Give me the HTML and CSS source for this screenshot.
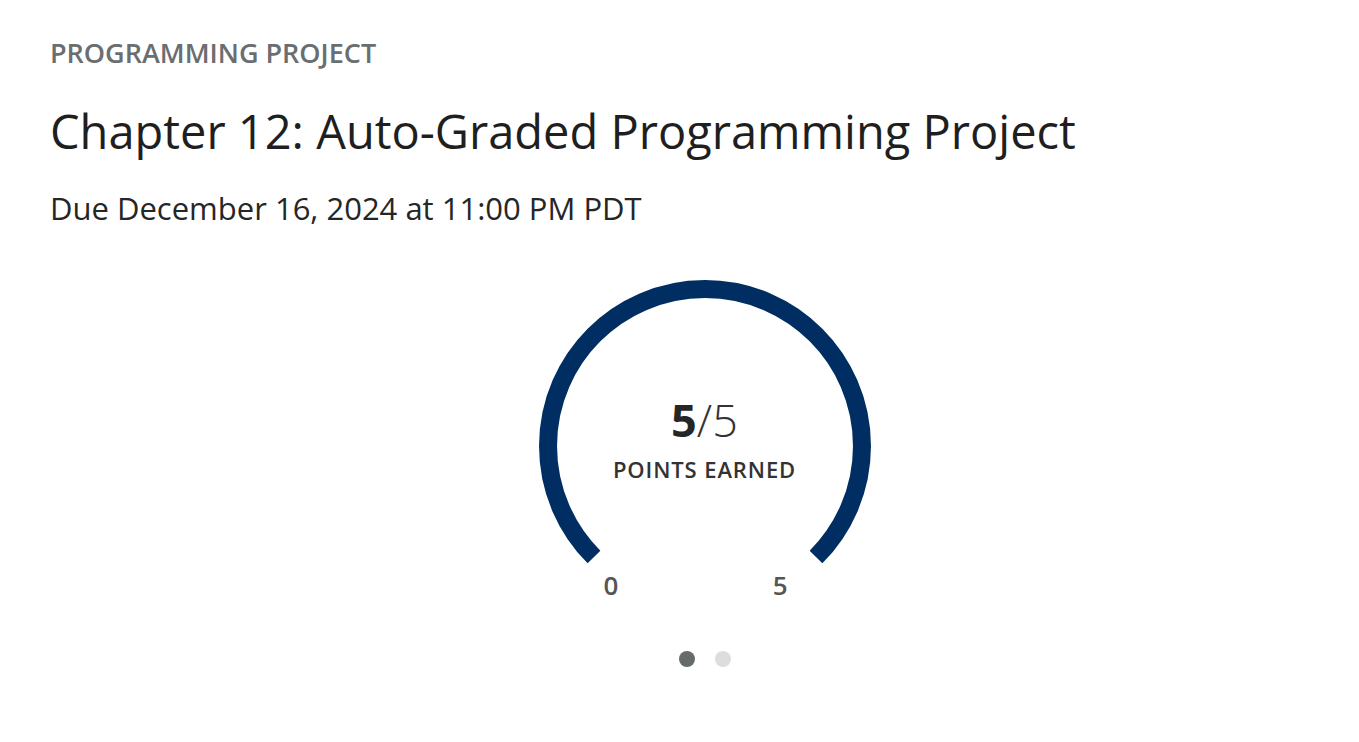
FILE: index.html
```html
<!DOCTYPE html>
<html lang="en">
<head>
<meta charset="utf-8">
<title>Chapter 12: Auto-Graded Programming Project</title>
<link rel="stylesheet" href="styles.css">
</head>
<body>
<main class="page">
  <header class="header">
    <div class="eyebrow">PROGRAMMING PROJECT</div>
    <h1 class="title">Chapter 12: Auto-Graded Programming Project</h1>
    <p class="due">Due December 16, 2024 at 11:00 PM PDT</p>
  </header>
  <section class="carousel">
    <div class="gauge">
      <svg class="gauge-arc" width="332" height="285" viewBox="0 0 332 285" aria-hidden="true">
        <path d="M 55 277 A 157 157 0 1 1 277 277" fill="none" stroke="#002d62" stroke-width="18"/>
      </svg>
      <div class="gauge-center">
        <div class="score"><b>5</b>/5</div>
        <div class="score-label">POINTS EARNED</div>
      </div>
      <div class="gauge-scale">
        <span>0</span>
        <span>5</span>
      </div>
    </div>
    <div class="dots">
      <span class="dot active"></span>
      <span class="dot"></span>
    </div>
  </section>
</main>
</body>
</html>
```
FILE: styles.css
```css
html, body {
  margin: 0;
  padding: 0;
  background: #ffffff;
}
body {
  font-family: "Open Sans", "Noto Sans", sans-serif;
  color: #222222;
}
.page {
  padding: 37px 0 0 50px;
}
.header {
  display: flex;
  flex-direction: column;
}
.eyebrow {
  font-size: 27px;
  line-height: 32px;
  font-weight: 600;
  color: #6a6e70;
}
.title {
  margin: 32px 0 0 0;
  font-size: 47px;
  line-height: 60px;
  font-weight: 400;
  color: #1f1f1f;
}
.due {
  margin: 27px 0 0 0;
  font-size: 31px;
  line-height: 40px;
  font-weight: 400;
  color: #262626;
}
.carousel {
  display: flex;
  flex-direction: column;
  align-items: center;
  margin-top: 52px;
}
.gauge {
  position: relative;
  display: flex;
  flex-direction: column;
  width: 332px;
}
.gauge-arc {
  display: block;
}
.gauge-center {
  position: absolute;
  left: 0;
  right: 0;
  top: 114px;
  display: flex;
  flex-direction: column;
  align-items: center;
}
.score {
  font-size: 45px;
  line-height: 52px;
  font-weight: 300;
  color: #333333;
}
.score b {
  font-weight: 700;
  color: #262626;
}
.score-label {
  margin-top: 9px;
  font-size: 22px;
  line-height: 28px;
  font-weight: 600;
  letter-spacing: 0.9px;
  color: #333333;
}
.gauge-scale {
  display: flex;
  justify-content: space-between;
  padding: 0 83px 0 65px;
  margin-top: 4px;
  font-size: 26px;
  line-height: 32px;
  font-weight: 600;
  color: #555555;
}
.dots {
  display: flex;
  gap: 20px;
  margin-top: 50px;
}
.dot {
  width: 16px;
  height: 16px;
  border-radius: 50%;
  background: #dddddd;
}
.dot.active {
  background: #666a6b;
}
```
